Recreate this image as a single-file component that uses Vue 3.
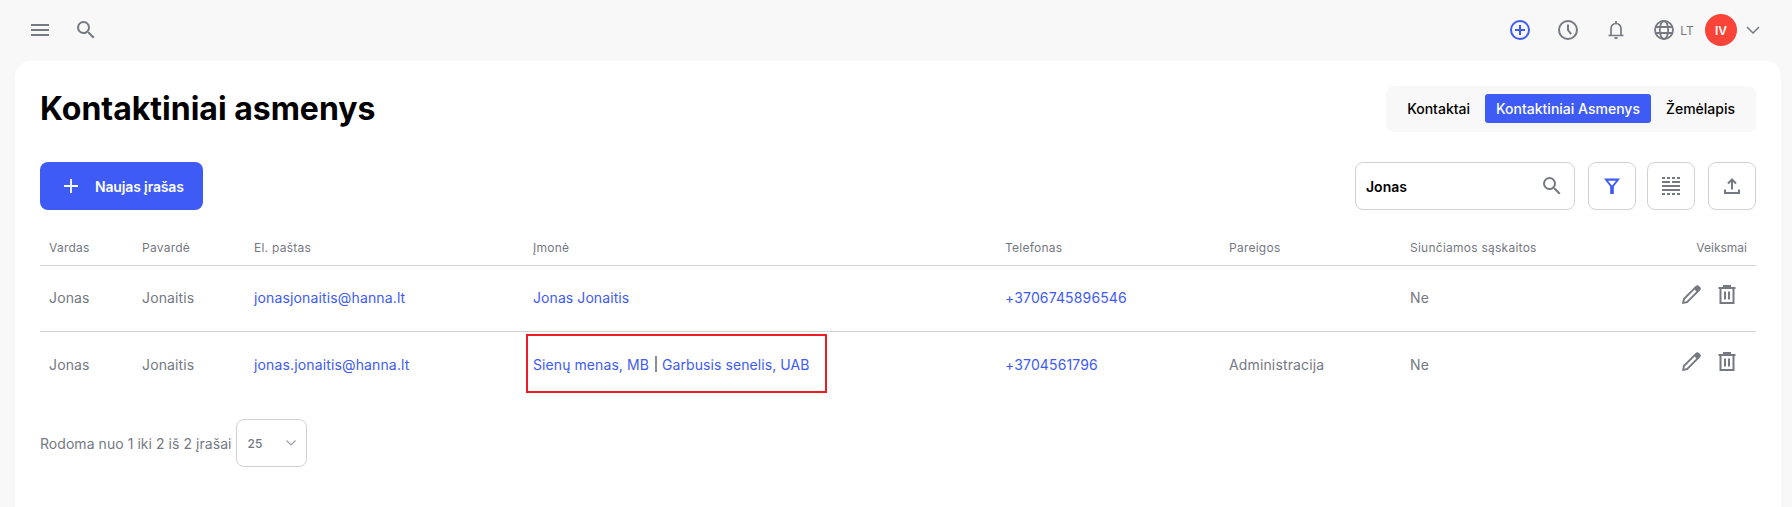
<script setup>
const columns = ['Vardas', 'Pavardė', 'El. paštas', 'Įmonė', 'Telefonas', 'Pareigos', 'Siunčiamos sąskaitos']
const rows = [
  { first: 'Jonas', last: 'Jonaitis', email: 'jonasjonaitis@hanna.lt', companies: ['Jonas Jonaitis'], phone: '+3706745896546', role: '', sends: 'Ne' },
  { first: 'Jonas', last: 'Jonaitis', email: 'jonas.jonaitis@hanna.lt', companies: ['Sienų menas, MB', 'Garbusis senelis, UAB'], phone: '+3704561796', role: 'Administracija', sends: 'Ne', marked: true }
]
</script>

<template>
  <div class="shell">
    <header class="topbar">
      <div class="top-left">
        <svg class="menu-icon" viewBox="0 0 18 12" width="18" height="12"><path d="M0 1h18M0 6h18M0 11h18" fill="none" stroke="#757982" stroke-width="1.8" /></svg>
        <svg viewBox="0 0 24 24" width="24" height="24"><path fill="#757982" d="M15.5 14h-.79l-.28-.27A6.47 6.47 0 0 0 16 9.5 6.5 6.5 0 1 0 9.5 16c1.61 0 3.09-.59 4.23-1.57l.27.28v.79l5 4.99L20.49 19l-4.99-5zm-6 0C7.01 14 5 11.99 5 9.5S7.01 5 9.5 5 14 7.01 14 9.5 11.99 14 9.5 14z" /></svg>
      </div>
      <div class="top-right">
        <svg class="ti" viewBox="0 0 24 24" width="24" height="24"><circle cx="12" cy="12" r="9" fill="none" stroke="#3e5bf6" stroke-width="2" /><path d="M12 7v10M7 12h10" stroke="#3e5bf6" stroke-width="2" /></svg>
        <svg class="ti" viewBox="0 0 24 24" width="24" height="24"><circle cx="12" cy="12" r="9" fill="none" stroke="#757982" stroke-width="2" /><path d="M12 6.500V12l3.200 4.200" fill="none" stroke="#757982" stroke-width="2" /></svg>
        <svg class="ti" viewBox="0 0 24 24" width="24" height="24"><path d="M4.500 17.500h15M7 17.300V10.500a5 5 0 0 1 10 0v6.800M12 3v2.400" fill="none" stroke="#757982" stroke-width="1.700" /><path d="M10 19.300h4a2 2 0 0 1-4 0z" fill="#757982" /></svg>
        <div class="lang">
          <svg viewBox="0 0 24 24" width="24" height="24"><g fill="none" stroke="#757982" stroke-width="1.800"><circle cx="12" cy="12" r="9" /><ellipse cx="12" cy="12" rx="4.200" ry="9" /><path d="M3.400 9h17.200M3.400 15h17.200" /></g></svg>
          <span>LT</span>
        </div>
        <div class="avatar">IV</div>
        <svg class="chev" viewBox="0 0 14 8" width="14" height="8"><path d="M1 1l6 6 6-6" fill="none" stroke="#757982" stroke-width="1.500" /></svg>
      </div>
    </header>

    <main class="card">
      <div class="head">
        <h1>Kontaktiniai asmenys</h1>
        <nav class="tabs">
          <a class="tab">Kontaktai</a>
          <a class="tab active">Kontaktiniai Asmenys</a>
          <a class="tab">Žemėlapis</a>
        </nav>
      </div>

      <div class="toolbar">
        <button class="primary">
          <svg viewBox="0 0 16 16" width="16" height="16"><path d="M8 1v14M1 8h14" stroke="#fff" stroke-width="1.800" /></svg>
          <span>Naujas įrašas</span>
        </button>
        <div class="tools">
          <div class="search">
            <span>Jonas</span>
            <svg viewBox="0 0 24 24" width="24" height="24"><path fill="#757982" d="M15.5 14h-.79l-.28-.27A6.47 6.47 0 0 0 16 9.5 6.5 6.5 0 1 0 9.5 16c1.61 0 3.09-.59 4.23-1.57l.27.28v.79l5 4.99L20.49 19l-4.99-5zm-6 0C7.01 14 5 11.99 5 9.5S7.01 5 9.5 5 14 7.01 14 9.5 11.99 14 9.5 14z" /></svg>
          </div>
          <button class="square">
            <svg viewBox="0 0 16 16" width="16" height="16"><path d="M0 .500h16L9.800 8.500V16H6.200V8.500z M4 2.800 7.600 7.200h.8L12 2.800z" fill="#3e5bf6" fill-rule="evenodd" /></svg>
          </button>
          <button class="square tight">
            <svg viewBox="0 0 18 18" width="18" height="18"><g fill="none" stroke="#757982" stroke-width="1.800"><path d="M0 1h18M0 17h18" stroke-dasharray="3 2" /><path d="M0 5h8M10 5h8" /><path d="M0 9h18M0 13h18" /></g></svg>
          </button>
          <button class="square">
            <svg viewBox="0 0 18 18" width="18" height="18"><path d="M9 12.500V2.500M5 6.500 9 2.500 13 6.500M2 12.500v3.500h14v-3.500" fill="none" stroke="#757982" stroke-width="2" /></svg>
          </button>
        </div>
      </div>

      <div class="grid header-row">
        <div v-for="c in columns" :key="c" class="cell">{{ c }}</div>
        <div class="cell end">Veiksmai</div>
      </div>

      <div v-for="(r, i) in rows" :key="i" class="grid row" :class="{ last: i === rows.length - 1 }">
        <div class="cell">{{ r.first }}</div>
        <div class="cell">{{ r.last }}</div>
        <div class="cell link">{{ r.email }}</div>
        <div class="cell link company">
          <template v-for="(co, j) in r.companies" :key="co">
            <span v-if="j" class="sep"></span>
            <span>{{ co }}</span>
          </template>
          <span v-if="r.marked" class="mark"></span>
        </div>
        <div class="cell link">{{ r.phone }}</div>
        <div class="cell">{{ r.role }}</div>
        <div class="cell">{{ r.sends }}</div>
        <div class="cell actions">
          <svg viewBox="0 0 19 19" width="19" height="19"><path d="M0 19l1-5.500L13.600 1a2.400 2.400 0 0 1 3.400 0l1 1a2.400 2.400 0 0 1 0 3.400L5.500 18z M2.300 16.700l2.300-.5L14.400 6.400 12.600 4.600 2.800 14.400z" fill="#757982" fill-rule="evenodd" /></svg>
          <svg viewBox="0 0 18 19" width="18" height="19"><path d="M.5 3h17M6 3V1h6v2M2.500 3.500V18h13V3.500M7 6.500v8M11 6.500v8" fill="none" stroke="#757982" stroke-width="2" /></svg>
        </div>
      </div>

      <div class="footer">
        <span>Rodoma nuo 1 iki 2 iš 2 įrašai</span>
        <div class="select">
          <span>25</span>
          <svg viewBox="0 0 10 6" width="10" height="6"><path d="M.5.500 5 5 9.500.500" fill="none" stroke="#9a9da5" stroke-width="1.100" /></svg>
        </div>
      </div>
    </main>
  </div>
</template>

<style>
html, body { margin: 0; background: #f8f8f8; overflow: hidden; }
</style>

<style scoped>
.shell {
  height: 507px;
  display: flex;
  flex-direction: column;
  overflow: hidden;
  font-family: Inter, "Noto Sans", sans-serif;
  color: #757982;
  background: #f8f8f8;
}
.topbar {
  flex: 0 0 61px;
  display: flex;
  justify-content: space-between;
  align-items: center;
  padding: 0 32px 1px 31px;
  box-sizing: border-box;
}
.top-left { display: flex; align-items: center; gap: 25px; }
.top-right { display: flex; align-items: center; }
.ti { margin-right: 24px; }
.lang { display: flex; align-items: center; gap: 4px; font-size: 12px; margin-right: 11px; letter-spacing: 0.2px; }
.avatar {
  width: 32px; height: 32px; border-radius: 50%;
  background: #f9443a; color: #fff;
  font-size: 12px; font-weight: 600;
  display: flex; align-items: center; justify-content: center;
}
.chev { margin-left: 9px; }
.card {
  flex: 1;
  margin: 0 11px 0 15px;
  padding: 25px 25px 0;
  background: #fff;
  border-radius: 16px 16px 0 0;
}
.head { display: flex; justify-content: space-between; align-items: center; height: 46px; }
h1 { margin: 0; font-size: 32px; font-weight: 700; color: #000; line-height: 44px; }
.tabs {
  display: flex; align-items: center; gap: 4px;
  height: 46px; box-sizing: border-box;
  padding: 0 10px 1px;
  background: #f8f8f8; border-radius: 8px;
}
.tab { font-size: 14px; font-weight: 500; color: #000; padding: 0 11px; line-height: 29px; border-radius: 3px; }
.tab.active { background: #3e5bf6; color: #fff; }
.toolbar { display: flex; justify-content: space-between; margin-top: 30px; height: 48px; }
button { font-family: inherit; cursor: pointer; }
.primary {
  width: 163px; height: 48px;
  border: 0; border-radius: 8px;
  background: #3e5bf6; color: #fff;
  font-size: 14px; font-weight: 600; letter-spacing: -0.15px;
  display: flex; align-items: center; gap: 16px;
  padding: 0 0 0 23px;
}
.tools { display: flex; gap: 13px; }
.search {
  width: 220px; height: 48px; box-sizing: border-box;
  border: 1px solid #d2d2d2; border-radius: 8px;
  display: flex; align-items: center; justify-content: space-between;
  padding: 0 10px 0 10px;
  font-size: 14px; font-weight: 600; color: #000;
}
.square {
  width: 48px; height: 48px; box-sizing: border-box;
  background: #fff;
  border: 1px solid #d2d2d2; border-radius: 8px;
  display: flex; align-items: center; justify-content: center; padding: 0;
}
.square.tight { margin-left: -2px; }
.grid {
  display: grid;
  grid-template-columns: 93px 112px 279px 472px 224px 181px 1fr 174px;
  width: 1716px;
}
.cell { padding: 0 9px; display: flex; align-items: center; white-space: nowrap; }
.cell.end { justify-content: flex-end; letter-spacing: 0; }
.header-row { height: 56px; font-size: 12px; letter-spacing: 0.25px; border-bottom: 1px solid #d2d2d2; box-sizing: border-box; padding-top: 20px; }
.row { height: 66px; font-size: 14px; letter-spacing: 0.14px; box-sizing: border-box; border-bottom: 1px solid #d2d2d2; padding-bottom: 2px; }
.row.last { border-bottom: 0; }
.link { color: #3e5bf6; }
.company { position: relative; letter-spacing: 0.08px; }
.sep { display: inline-block; width: 2px; height: 16px; background: #8a8d95; margin: 0 5px 0 6px; }
.mark {
  position: absolute; left: 2px; top: 2px;
  width: 301px; height: 59px;
  box-sizing: border-box;
  border: 2px solid #ed1c24;
}
.actions { justify-content: flex-end; gap: 17px; padding: 0 20px 6px 0; }
.footer { display: flex; align-items: center; gap: 5px; font-size: 14px; letter-spacing: 0.05px; margin-top: 21px; }
.select {
  width: 71px; height: 48px; box-sizing: border-box;
  border: 1px solid #d2d2d2; border-radius: 8px;
  display: flex; align-items: center; justify-content: space-between;
  padding: 0 10px;
  font-size: 12px; font-weight: 500;
}
</style>
